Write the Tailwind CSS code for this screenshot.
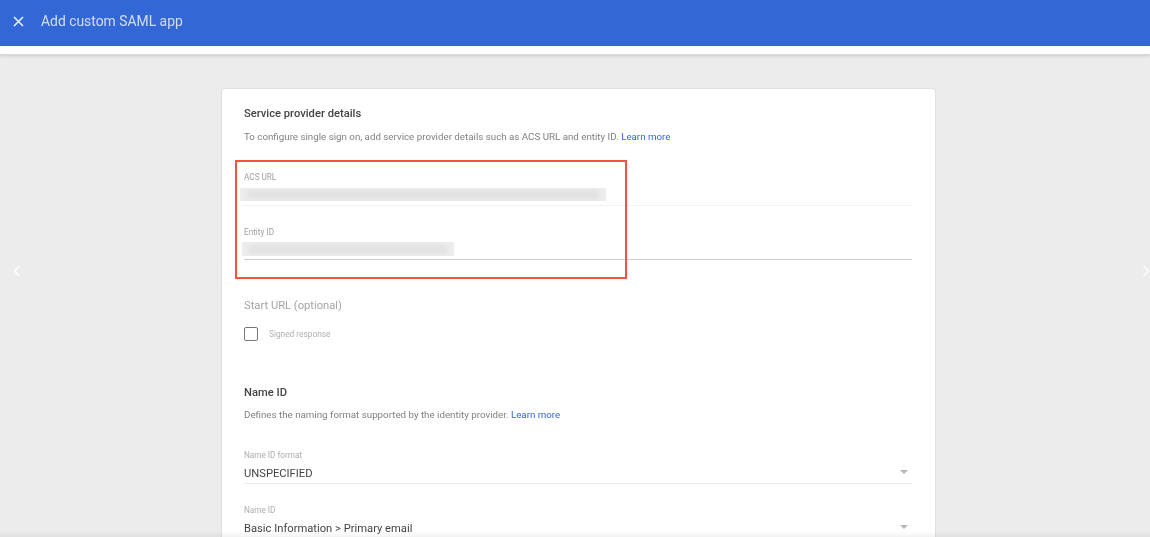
<!DOCTYPE html>
<html lang="en">
<head>
    <meta charset="UTF-8">
    <meta name="viewport" content="width=device-width, initial-scale=1.0">
    <title>Add custom SAML app</title>
    <script src="https://cdn.jsdelivr.net/npm/@tailwindcss/browser@4"></script>
</head>
<body class="font-['Roboto',sans-serif] bg-[#ececec] overflow-hidden">
<div class="relative h-[537px] w-[1150px] overflow-hidden flex flex-col">
    <!-- top bar -->
    <header class="h-[55px] shrink-0 bg-white border-b border-[#d9d9d9] shadow-[0_1px_3px_rgba(0,0,0,0.15)]">
        <div class="h-[46px] bg-[#3367d6] flex items-center pb-[4px] pl-[13px] gap-[17px]">
            <svg class="w-[11px] h-[11px] blur-[0.3px]" viewBox="0 0 11 11" fill="none" stroke="#f2f5fc" stroke-width="1.5"><path d="M1 1l9 9M10 1l-9 9"/></svg>
            <span class="text-[13.9px] text-[#d3dff7] blur-[0.6px]">Add custom SAML app</span>
        </div>
    </header>

    <main class="relative flex-1 pt-[34px] pl-[222px]">
        <!-- pager arrows -->
        <svg class="absolute left-[13px] top-[210px] w-[8px] h-[12px] blur-[0.3px]" viewBox="0 0 8 12" fill="none" stroke="#fff" stroke-width="1.5"><path d="M6.5 1L1.5 6l5 5"/></svg>
        <svg class="absolute left-[1142px] top-[210px] w-[8px] h-[12px] blur-[0.3px]" viewBox="0 0 8 12" fill="none" stroke="#fff" stroke-width="1.5"><path d="M1.5 1l5 5-5 5"/></svg>

        <section class="relative w-[713px] h-[480px] bg-white rounded-[3px] shadow-[0_0_2px_rgba(0,0,0,0.18)] pl-[22px] pr-[23px] pt-[18px]">
            <div class="blur-[0.7px]">
                <h2 class="text-[11.2px] leading-[14px] font-medium text-[#444]">Service provider details</h2>
                <p class="mt-[10px] text-[9.75px] leading-[12px] text-[#808080]">To configure single sign on, add service provider details such as ACS URL and entity ID. <a class="text-[#3367d6]">Learn more</a></p>

                <div class="mt-[29px] h-[34px] border-b border-[#f3f3f3]">
                    <div class="text-[8.2px] leading-[10px] text-[#a0a0a0]">ACS URL</div>
                    <div class="mt-[6px] -ml-[4px] h-[13px] w-[366px] bg-[#eeeeee] overflow-hidden">
                        <div class="mt-[2px] mx-[6px] h-[9px] bg-[#e0e0e0] blur-[3px]"></div>
                    </div>
                </div>
                <div class="mt-[21px] h-[33px] border-b border-[#cfcfcf]">
                    <div class="text-[8.2px] leading-[10px] text-[#a0a0a0]">Entity ID</div>
                    <div class="mt-[5px] -ml-[2px] h-[14px] w-[212px] bg-[#eeeeee] overflow-hidden">
                        <div class="mt-[3px] mx-[6px] h-[9px] bg-[#e0e0e0] blur-[3px]"></div>
                    </div>
                </div>

                <div class="mt-[39px] h-[17px] text-[11.2px] leading-[14px] text-[#a3a3a3]">Start URL (optional)</div>
                <div class="mt-[11px] flex items-center gap-[11px]">
                    <span class="w-[14px] h-[14px] rounded-[2px] border-[1.5px] border-[#777]"></span>
                    <span class="text-[8.3px] leading-[10px] text-[#b0b0b0]">Signed response</span>
                </div>

                <h2 class="mt-[45px] text-[11.2px] leading-[14px] font-medium text-[#444]">Name ID</h2>
                <p class="mt-[9px] text-[9.75px] leading-[12px] text-[#808080]">Defines the naming format supported by the identity provider. <a class="text-[#3367d6]">Learn more</a></p>

                <div class="mt-[29px] h-[34px] border-b border-[#ebebeb] relative">
                    <div class="text-[8.2px] leading-[10px] text-[#adadad]">Name ID format</div>
                    <div class="mt-[7px] text-[11.2px] leading-[14px] text-[#444]">UNSPECIFIED</div>
                    <span class="absolute right-[4px] top-[20px] border-x-[4px] border-x-transparent border-t-[4px] border-t-[#b5b5b5]"></span>
                </div>
                <div class="mt-[21px] h-[34px] relative">
                    <div class="text-[8.2px] leading-[10px] text-[#adadad]">Name ID</div>
                    <div class="mt-[7px] text-[11.2px] leading-[14px] text-[#444]">Basic Information &gt; Primary email</div>
                    <span class="absolute right-[4px] top-[20px] border-x-[4px] border-x-transparent border-t-[4px] border-t-[#b5b5b5]"></span>
                </div>
            </div>

            <!-- red highlight over the two fields -->
            <div class="absolute left-[13px] top-[71px] w-[392px] h-[119px] border-2 border-[#f4533c] blur-[0.3px]"></div>
        </section>
    </main>
    <!-- fade at bottom edge -->
    <div class="absolute left-0 right-0 bottom-0 h-[6px] bg-gradient-to-b from-transparent to-black/5"></div>
</div>
</body>
</html>
